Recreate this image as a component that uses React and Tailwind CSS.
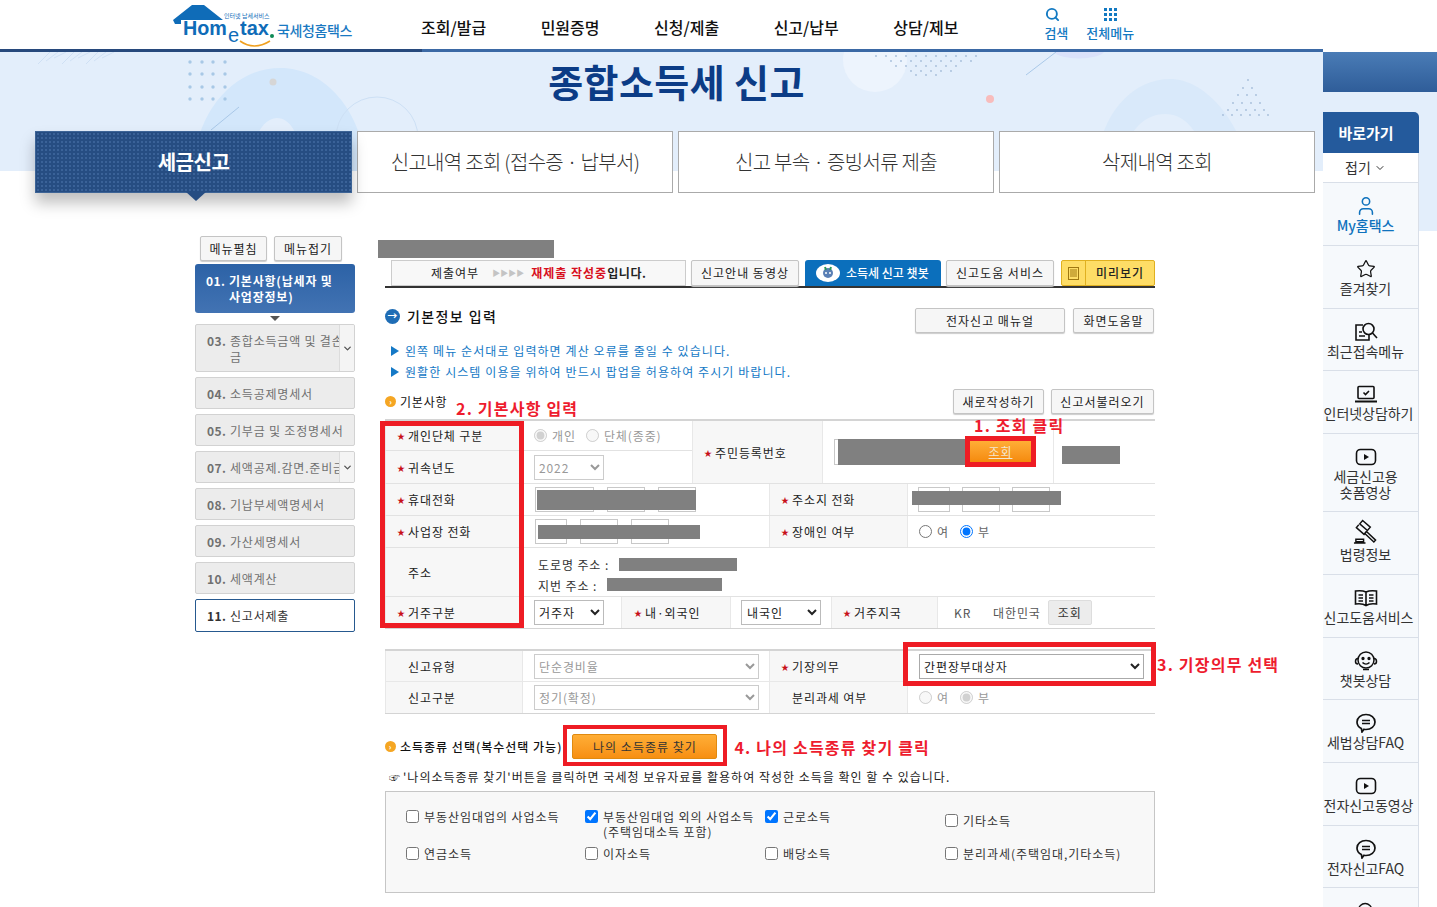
import React from 'react';
import { User, Star, Search, ChevronDown } from 'lucide-react';

const cell = 'flex items-center';
const labelBg = 'bg-[#f7f7f7]';

const Star2 = () => <span className="text-[8px] text-[#c8101a] mr-[5px] w-[6px] leading-none">★</span>;

const Label = ({ req, children, className = '', plain }) => (
  <div className={`${cell} ${labelBg} h-full pt-[1px] border-x border-[#e8e8e8] ${className}`}>
    {req ? <Star2 /> : plain ? null : <span className="w-[11px]" />}
    <span>{children}</span>
  </div>
);

const Redact = ({ className }) => <div className={`absolute bg-[#808080] ${className}`} />;

const Btn = ({ className = '', children }) => (
  <button type="button" className={`h-[25px] border border-[#c4c4c4] rounded-[2px] bg-[#f6f6f6] shadow-[0_1px_1px_#ccc] text-[12px] text-[#222] tracking-[1px] ${className}`}>
    {children}
  </button>
);

const TextBox = ({ className = '' }) => <div className={`h-[25px] border border-[#c8c8c8] bg-white ${className}`} />;

function Logo() {
  return (
    <div className="relative w-[200px] h-[49px] font-['Liberation_Sans',sans-serif]">
      <svg className="absolute left-0 top-[4px]" width="50" height="20" viewBox="0 0 50 20">
        <path d="M0 16 L19 1 L31 1 L50 16 L8 16 L8 20 L2 20 Z" fill="#0f6cb8" />
      </svg>
      <span className="absolute left-[10px] top-[20px] text-[21px] leading-[16px] font-bold text-[#0f6cb8] scale-x-[0.94] origin-left">Hom</span>
      <span className="absolute left-[55px] top-[27px] text-[20px] leading-[16px] text-[#0f6cb8]">e</span>
      <span className="absolute left-[67px] top-[20px] text-[21px] leading-[16px] font-bold text-[#0f6cb8] scale-x-[0.95] origin-left">tax</span>
      <span className="absolute left-[97px] top-[34px] w-[4px] h-[4px] rounded-full bg-[#0e8a56]" />
      <svg className="absolute left-[66px] top-[40px]" width="32" height="8" viewBox="0 0 32 8">
        <path d="M1 1 Q15 11 31 1" fill="none" stroke="#f0a020" strokeWidth="1.6" />
      </svg>
      <span className="absolute left-[51px] top-[13px] text-[6px] leading-[6px] text-[#0f6cb8] font-['Noto_Sans_CJK_KR'] whitespace-nowrap">인터넷 납세서비스</span>
      <span className="absolute left-[104px] top-[21px] text-[14px] leading-[18px] font-medium text-[#1a79c2] font-['Noto_Sans_CJK_KR'] tracking-[-0.4px] whitespace-nowrap">국세청홈택스</span>
    </div>
  );
}

function HeroDecor() {
  return (
    <svg className="absolute inset-0" width="1323" height="119" viewBox="0 52 1323 119">
      <g stroke="#cfe0f4" strokeWidth="1">
        {[0, 1, 2, 3, 4, 5, 6, 7, 8].map((i) => (
          <line key={i} x1={50 + i * 8} y1="52" x2={38 + i * 8} y2={64 - (i % 3) * 3} />
        ))}
      </g>
      <path d="M193 171 C196 110 235 68 280 68 C325 68 362 110 367 171 L303 171 C302 135 290 118 277 118 C264 118 252 135 250 171 Z" fill="#d3e7fb" />
      <circle cx="377" cy="138" r="41" fill="none" stroke="#cde0f5" />
      <line x1="211" y1="130" x2="239" y2="107" stroke="#a9c8e8" />
      <circle cx="273" cy="82" r="3.5" fill="#d6d6d6" />
      {[62, 74, 87, 99].map((y) => [190, 202, 213, 225].map((x) => (
        <circle key={`${x}-${y}`} cx={x} cy={y} r="1.7" fill="#a8c8e6" />
      )))}
      <ellipse cx="875" cy="60" rx="32" ry="32" fill="#edf4fd" />
      {[56, 61, 66, 71, 75].map((y, r) => [0, 1, 2, 3, 4, 5, 6, 7, 8, 9, 10].slice(r, 11 - r).map((i) => (
        <circle key={`${i}-${y}`} cx={876 + i * 10 + (r % 2) * 5} cy={y} r="0.9" fill="#a5bcd8" />
      )))}
      <path d="M1054 52 A26 9 0 0 0 1104 52 Z" fill="#dbe2fa" />
      <line x1="1026" y1="75" x2="1056" y2="52" stroke="#a9c8e8" />
      <circle cx="990" cy="99" r="4" fill="#f8bcbc" />
      <path d="M1095 171 C1100 110 1135 79 1170 79 C1205 79 1240 120 1250 171 L1210 171 C1200 130 1185 114 1165 114 C1145 114 1125 130 1120 171 Z" fill="#d9e9fa" />
      {[80, 88, 95, 103, 110, 115].map((y, r) => [0, 1, 2, 3, 4, 5].slice(0, r + 1).map((i) => (
        <circle key={`t${i}-${y}`} cx={1248 - r * 5 + i * 9} cy={y} r="0.9" fill="#a5bcd8" />
      )))}
    </svg>
  );
}

const tabs = ['신고내역 조회 (접수증 · 납부서)', '신고 부속 · 증빙서류 제출', '삭제내역 조회'];

const menu = [
  ['03.', '종합소득금액 및 결손금', 'h-[48px]', true],
  ['04.', '소득공제명세서', 'h-[32px]'],
  ['05.', '기부금 및 조정명세서', 'h-[32px]'],
  ['07.', '세액공제.감면.준비금', 'h-[32px]', true],
  ['08.', '기납부세액명세서', 'h-[32px]'],
  ['09.', '가산세명세서', 'h-[32px]'],
  ['10.', '세액계산', 'h-[32px]'],
];

function SideMenu() {
  return (
    <div className="w-[160px] text-[12px] tracking-[0.8px]">
      <div className="flex gap-[7px] pl-[5px]">
        <Btn className="w-[67px] bg-[#ededed]">메뉴펼침</Btn>
        <Btn className="w-[68px] bg-[#ededed]">메뉴접기</Btn>
      </div>
      <div className="mt-[3px] h-[49px] rounded-[3px] bg-gradient-to-b from-[#2c62a6] to-[#4273b3] text-white font-bold flex pl-[11px] pt-[9px] leading-[16px]">
        <span className="w-[23px] shrink-0 tracking-[0.4px]">01.</span>
        <span>기본사항(납세자 및<br />사업장정보)</span>
      </div>
      <div className="flex justify-center h-[11px] items-center">
        <div className="w-0 h-0 border-x-[5px] border-x-transparent border-t-[5px] border-t-[#555]" />
      </div>
      <div className="flex flex-col gap-[5px]">
        {menu.map(([no, text, h, scroll]) => (
          <div key={no} className={`relative ${h} overflow-hidden rounded-[2px] border border-[#d2d2d2] bg-[#ececec] text-[#707070] flex items-start pl-[11px] pt-[8px] leading-[16px]`}>
            <span className="w-[23px] shrink-0 font-bold tracking-[0.4px]">{no}</span>
            <span className="pr-[4px]">{text}</span>
            {scroll && (
              <div className="absolute right-0 top-0 bottom-0 w-[15px] bg-[#f4f4f4] border-l border-[#dcdcdc] flex items-center justify-center">
                <ChevronDown size={11} strokeWidth={3} className="text-[#555]" />
              </div>
            )}
          </div>
        ))}
        <div className="h-[33px] rounded-[2px] border border-[#26598f] bg-white text-[#333] flex items-center pl-[11px]">
          <span className="w-[23px] shrink-0 font-bold tracking-[0.4px]">11.</span>
          <span>신고서제출</span>
        </div>
      </div>
    </div>
  );
}

const Annot = ({ className = '', children }) => (
  <span className={`text-[16px] leading-[20px] font-bold text-[#ee1c2e] tracking-[1.2px] whitespace-nowrap ${className}`}>{children}</span>
);

const OrangeDot = () => (
  <span className="w-[11px] h-[11px] rounded-full bg-[#f5a623] text-white text-[8px] leading-[11px] text-center font-bold shrink-0">›</span>
);

const Tri = () => <div className="w-0 h-0 border-y-[5px] border-y-transparent border-l-[8px] border-l-[#1579c6] shrink-0" />;

function BasicTable() {
  return (
    <div className="border-t-2 border-[#d4d4d4] text-[12px] text-[#222] tracking-[0.9px] relative">
      <div className="flex h-[63px] border-b border-[#e2e2e2]">
        <div className="w-[307px] flex flex-col">
          <div className="flex h-[30px] border-b border-[#e2e2e2]">
            <Label req className="w-[139px] pl-[11px]">개인단체 구분</Label>
            <div className={`${cell} pl-[10px] gap-[5px] text-[#999]`}>
              <input type="radio" disabled defaultChecked name="k" />
              <span>개인</span>
              <input type="radio" disabled name="k" className="ml-[5px]" />
              <span>단체(종중)</span>
            </div>
          </div>
          <div className="flex h-[32px]">
            <Label req className="w-[139px] pl-[11px]">귀속년도</Label>
            <div className={`${cell} pl-[10px]`}>
              <select disabled className="w-[70px] h-[25px] border border-[#ccc] text-[#999] text-[12px]"><option>2022</option></select>
            </div>
          </div>
        </div>
        <Label req className="w-[131px] pl-[11px]">주민등록번호</Label>
        <div className="relative w-[231px] border-r border-[#e8e8e8] pl-[11px] pt-[18px]">
          <TextBox className="w-[140px] h-[26px]" />
          <Redact className="left-[15px] top-[18px] w-[128px] h-[26px]" />
          <div className="absolute left-[142px] top-[15px] w-[71px] h-[31px] border-[5px] border-[#ee1c24] bg-gradient-to-b from-[#ffae35] to-[#f58a0a] text-[#f3e6d0] text-[12px] text-center leading-[21px] underline">조회</div>
        </div>
        <div className="relative flex-1">
          <Redact className="left-[8px] top-[25px] w-[58px] h-[18px]" />
        </div>
      </div>
      <div className="flex h-[32px] border-b border-[#e2e2e2]">
        <Label req className="w-[139px] pl-[11px]">휴대전화</Label>
        <div className={`${cell} relative w-[245px] pl-[11px] gap-[13px]`}>
          <TextBox className="w-[59px]" />
          <TextBox className="w-[38px]" />
          <TextBox className="w-[38px]" />
          <Redact className="left-[13px] top-[6px] w-[159px] h-[20px]" />
        </div>
        <Label req className="w-[139px] pl-[11px]">주소지 전화</Label>
        <div className={`${cell} relative flex-1 pl-[10px] gap-[12px]`}>
          <TextBox className="w-[32px]" />
          <TextBox className="w-[38px]" />
          <TextBox className="w-[38px]" />
          <Redact className="left-[4px] top-[7px] w-[149px] h-[14px]" />
        </div>
      </div>
      <div className="flex h-[32px] border-b border-[#e2e2e2]">
        <Label req className="w-[139px] pl-[11px]">사업장 전화</Label>
        <div className={`${cell} relative w-[245px] pl-[11px] gap-[13px]`}>
          <TextBox className="w-[32px]" />
          <TextBox className="w-[38px]" />
          <TextBox className="w-[38px]" />
          <Redact className="left-[14px] top-[9px] w-[162px] h-[14px]" />
        </div>
        <Label req className="w-[139px] pl-[11px]">장애인 여부</Label>
        <div className={`${cell} flex-1 pl-[11px] gap-[5px] text-[#666]`}>
          <input type="radio" name="d" />
          <span>여</span>
          <input type="radio" name="d" defaultChecked className="ml-[6px]" />
          <span>부</span>
        </div>
      </div>
      <div className="flex h-[49px] border-b border-[#e2e2e2]">
        <Label className="w-[139px] pl-[11px]">주소</Label>
        <div className="relative flex-1 pl-[14px] pt-[6px] leading-[21px] text-[#333]">
          <div>도로명 주소 :</div>
          <div>지번 주소 :</div>
          <Redact className="left-[95px] top-[10px] w-[118px] h-[13px]" />
          <Redact className="left-[83px] top-[30px] w-[115px] h-[13px]" />
        </div>
      </div>
      <div className="flex h-[32px] border-b border-[#d4d4d4]">
        <Label req className="w-[139px] pl-[11px]">거주구분</Label>
        <div className={`${cell} w-[97px] pl-[10px]`}>
          <select className="w-[70px] h-[25px] border border-[#bbb] text-[12px]"><option>거주자</option></select>
        </div>
        <Label req className="w-[110px] pl-[12px]">내·외국인</Label>
        <div className={`${cell} w-[100px] pl-[10px]`}>
          <select className="w-[80px] h-[25px] border border-[#bbb] pl-[1px] text-[12px]"><option>내국인</option></select>
        </div>
        <Label req className="w-[107px] pl-[11px]">거주지국</Label>
        <div className={`${cell} flex-1 pl-[16px] text-[#555]`}>
          <span className="w-[39px]">KR</span>
          <span className="whitespace-nowrap">대한민국</span>
          <span className="ml-[7px] w-[44px] h-[25px] border border-[#ddd] rounded-[2px] bg-[#ececec] flex items-center justify-center text-[#333]">조회</span>
        </div>
      </div>
    </div>
  );
}

function ReportTable() {
  return (
    <div className="relative mt-[20px] border-t-2 border-[#d4d4d4] text-[12px] text-[#222] tracking-[0.9px]">
      <div className="flex h-[31px] border-b border-[#e8e8e8]">
        <Label plain className="w-[138px] pl-[22px]">신고유형</Label>
        <div className={`${cell} w-[246px] pl-[11px]`}>
          <select disabled className="w-[225px] h-[25px] border border-[#ccc] text-[#999] text-[12px]"><option>단순경비율</option></select>
        </div>
        <Label req className="w-[139px] pl-[11px]">기장의무</Label>
        <div className={`${cell} flex-1 pl-[11px]`}>
          <select className="w-[225px] h-[25px] border border-[#aaa] text-[12px]"><option>간편장부대상자</option></select>
        </div>
      </div>
      <div className="flex h-[32px] border-b border-[#d4d4d4]">
        <Label plain className="w-[138px] pl-[22px]">신고구분</Label>
        <div className={`${cell} w-[246px] pl-[11px]`}>
          <select disabled className="w-[225px] h-[25px] border border-[#ccc] text-[#999] text-[12px]"><option>정기(확정)</option></select>
        </div>
        <Label className="w-[139px] pl-[11px]">분리과세 여부</Label>
        <div className={`${cell} flex-1 pl-[11px] gap-[5px] text-[#999]`}>
          <input type="radio" disabled name="s" />
          <span>여</span>
          <input type="radio" disabled defaultChecked name="s" className="ml-[6px]" />
          <span>부</span>
        </div>
      </div>
      <div className="absolute left-[518px] -top-[9px] w-[253px] h-[44px] border-[5px] border-[#ee1c24] pointer-events-none" />
      <Annot className="absolute left-[772px] top-[3px]">3. 기장의무 선택</Annot>
    </div>
  );
}

const Check = ({ checked, className = '', children }) => (
  <label className={`flex items-start gap-[5px] ${className}`}>
    <input type="checkbox" defaultChecked={checked} className="mt-[1px] shrink-0" />
    <span className="leading-[15px] whitespace-nowrap">{children}</span>
  </label>
);

function MainForm() {
  return (
    <div className="ml-[30px] w-[770px]">
      <div className="-ml-[7px] mt-[4px] w-[176px] h-[18px] bg-[#808080]" />
      <div className="mt-[2px] h-[28px] border-b-2 border-[#333] flex gap-[5px] text-[12px] tracking-[1px] text-[#222]">
        <div className="ml-[6px] w-[295px] h-[26px] border border-[#ccc] bg-[#f8f8f8] flex items-center pl-[39px] whitespace-nowrap">
          <span>제출여부</span>
          <span className="ml-[13px] text-[#c4c4c4] text-[8px] tracking-[0px]">▶▶▶▶</span>
          <span className="ml-[7px] font-bold text-[#d8101e] tracking-[1px]">재제출 작성중</span>
          <span className="font-bold tracking-[0.6px]">입니다.</span>
        </div>
        <Btn className="w-[108px] h-[26px]">신고안내 동영상</Btn>
        <div className="ml-[1px] w-[136px] h-[26px] rounded-t-[3px] bg-[#0b6fbc] text-white flex items-center pl-[11px] gap-[6px]">
          <svg width="24" height="20" viewBox="0 0 24 20">
            <ellipse cx="12" cy="10" rx="12" ry="9" fill="#fff" />
            <circle cx="12" cy="10" r="5" fill="#5a7fb5" />
            <path d="M9 4 L10 7 M15 4 L14 7" stroke="#2a9a5a" strokeWidth="2" />
            <circle cx="10" cy="10" r="1" fill="#fff" />
            <circle cx="14" cy="10" r="1" fill="#fff" />
          </svg>
          <span className="font-medium tracking-[0px] whitespace-nowrap">소득세 신고 챗봇</span>
        </div>
        <Btn className="w-[108px] h-[26px]">신고도움 서비스</Btn>
        <div className="ml-[2px] w-[94px] h-[26px] rounded-[2px] border border-[#e0b020] bg-[#fedd66] flex items-center">
          <div className="w-[24px] h-full border-r border-[#e0b020] flex items-center justify-center">
            <svg width="11" height="13" viewBox="0 0 11 13" fill="none" stroke="#a07810">
              <rect x="0.5" y="0.5" width="10" height="12" />
              <path d="M2 3h7M2 5h7M2 7h7M2 9h7" />
            </svg>
          </div>
          <span className="flex-1 text-center font-medium">미리보기</span>
        </div>
      </div>

      <div className="mt-[20px] flex items-start justify-between pr-[1px]">
        <div className="flex items-center gap-[7px] h-[16px]">
          <span className="w-[15px] h-[15px] rounded-full bg-[#1f6db5] text-white text-[10px] leading-[14px] text-center font-bold">→</span>
          <span className="text-[14px] font-medium text-[#111] tracking-[1.4px]">기본정보 입력</span>
        </div>
        <div className="flex gap-[8px]">
          <Btn className="w-[150px]">전자신고 매뉴얼</Btn>
          <Btn className="w-[81px]">화면도움말</Btn>
        </div>
      </div>

      <div className="mt-[7px] text-[12px] leading-[21px] text-[#1579c6] tracking-[1.08px]">
        <div className="flex items-center gap-[6px] pl-[6px]"><Tri />왼쪽 메뉴 순서대로 입력하면 계산 오류를 줄일 수 있습니다.</div>
        <div className="flex items-center gap-[6px] pl-[6px]"><Tri />원활한 시스템 이용을 위하여 반드시 팝업을 허용하여 주시기 바랍니다.</div>
      </div>

      <div className="relative mt-[7px] flex items-center justify-between pr-[1px]">
        <div className="flex items-center">
          <OrangeDot />
          <span className="ml-[4px] text-[12px] tracking-[0.8px] text-[#111]">기본사항</span>
          <Annot className="absolute left-[71px] top-[9px]">2. 기본사항 입력</Annot>
        </div>
        <div className="flex gap-[7px]">
          <Btn className="w-[91px]">새로작성하기</Btn>
          <Btn className="w-[103px]">신고서불러오기</Btn>
        </div>
      </div>

      <div className="relative mt-[5px]">
        <BasicTable />
        <div className="absolute -left-[5px] top-[2px] w-[144px] h-[207px] border-[5px] border-[#ee1c24] pointer-events-none" />
        <Annot className="absolute left-[589px] -top-[4px]">1. 조회 클릭</Annot>
      </div>

      <ReportTable />

      <div className="mt-[20px] h-[25px] flex items-center text-[12px] text-[#111] tracking-[1px]">
        <OrangeDot />
        <span className="ml-[4px] font-medium whitespace-nowrap">소득종류 선택(복수선택 가능)</span>
        <div className="ml-[10px] relative">
          <button type="button" className="w-[145px] h-[25px] rounded-[2px] border border-[#e08a10] bg-gradient-to-b from-[#ffae35] to-[#f78f10] text-[#333] text-[12px] tracking-[1px]">나의 소득종류 찾기</button>
          <div className="absolute -left-[9px] -top-[9px] w-[164px] h-[41px] border-[4px] border-[#ee1c24]" />
        </div>
        <Annot className="ml-[17px]">4. 나의 소득종류 찾기 클릭</Annot>
      </div>
      <div className="mt-[8px] h-[20px] pl-[4px] flex items-center text-[12px] text-[#222] tracking-[1px] whitespace-nowrap">
        <span className="text-[11px] mr-[2px]">☞</span>
        <span>'나의소득종류 찾기'버튼을 클릭하면 국세청 보유자료를 활용하여 작성한 소득을 확인 할 수 있습니다.</span>
      </div>
      <div className="mt-[4px] h-[102px] border border-[#c6c6c6] bg-[#f8f8f8] pl-[20px] pt-[17px] grid grid-cols-[179px_180px_180px_1fr] grid-rows-[37px_auto] text-[12px] text-[#333] tracking-[0.95px]">
        <Check>부동산임대업의 사업소득</Check>
        <Check checked>부동산임대업 외의 사업소득<br />(주택임대소득 포함)</Check>
        <Check checked>근로소득</Check>
        <Check className="mt-[4px]">기타소득</Check>
        <Check>연금소득</Check>
        <Check>이자소득</Check>
        <Check>배당소득</Check>
        <Check>분리과세(주택임대,기타소득)</Check>
      </div>
    </div>
  );
}

const PlayIcon = () => (
  <svg width="22" height="18" viewBox="0 0 22 18" fill="none" stroke="#111" strokeWidth="1.6">
    <rect x="1.5" y="1.5" width="19" height="15" rx="4" />
    <path d="M9 6l5 3-5 3z" fill="#111" stroke="none" />
  </svg>
);
const ChatIcon = () => (
  <svg width="22" height="20" viewBox="0 0 22 20" fill="none" stroke="#111" strokeWidth="1.7">
    <path d="M11 1.5c5 0 9 3 9 7.5s-4 7.5-9 7.5c-1 0-1.500-.1-2-.2L7 19l-.6-3.500C3.500 14.200 2 11.800 2 9c0-4.500 4-7.500 9-7.500z" />
    <path d="M7 7.500h8M7 10.500h8" />
  </svg>
);
const DocSearchIcon = () => (
  <svg width="24" height="20" viewBox="0 0 24 20" fill="none" stroke="#111" strokeWidth="1.6">
    <path d="M9 3H2v15h13v-5" />
    <path d="M5 10h3M5 14h6" />
    <circle cx="14.500" cy="7" r="5.500" />
    <path d="M18.500 11l4.500 5" />
  </svg>
);
const LaptopIcon = () => (
  <svg width="24" height="18" viewBox="0 0 24 18" fill="none" stroke="#111" strokeWidth="1.6">
    <rect x="4" y="1.500" width="16" height="12" rx="1" />
    <path d="M1 16.500h22" strokeWidth="2" />
    <path d="M9.500 7.500l2 2 3.500-3.500" />
  </svg>
);
const BookIcon = () => (
  <svg width="24" height="18" viewBox="0 0 24 18" fill="none" stroke="#111" strokeWidth="1.6">
    <path d="M12 3C9 1.500 5 1.500 1.500 2v13c3.500-.5 7.500-.5 10.500 1.500 3-2 7-2 10.500-1.500V2C19 1.500 15 1.500 12 3zM12 3v13.500" />
    <path d="M4.500 6h4.500M4.500 9h4.500M4.500 12h4.500M15 6h4.500M15 9h4.500M15 12h4.500" />
  </svg>
);
const HeadsetIcon = () => (
  <svg width="24" height="22" viewBox="0 0 24 22" fill="none" stroke="#111" strokeWidth="1.5">
    <circle cx="12" cy="10" r="8" />
    <path d="M4 8.500c-2 0-2.500 1.500-2.500 3s.5 2.500 2.500 2.500M20 8.500c2 0 2.500 1.500 2.500 3s-.5 2.500-2.500 2.500" />
    <path d="M8.500 12.500c2 2 5 2 7 0" />
    <path d="M9 19.500h6" />
    <circle cx="9" cy="8.500" r=".9" fill="#111" />
    <circle cx="15" cy="8.500" r=".9" fill="#111" />
  </svg>
);
const GavelIcon = () => (
  <svg className="-translate-y-[4px]" width="25" height="25" viewBox="0 0 26 26" fill="none" stroke="#111" strokeWidth="1.5">
    <path d="M10 1.500l8 7-3 3.500-8-7z" />
    <path d="M6 6l-2.500 3 8 7 2.500-3" />
    <path d="M13.500 12.500l10 9.500-1.800 2-10-9.500" />
    <path d="M3 21h8v2.500H3zM1 25h12" />
  </svg>
);

const quick = [
  { icon: <User size={22} strokeWidth={1.7} className="text-[#0f72bd]" />, label: 'My홈택스', h: 'h-[63px]', blue: true },
  { icon: <Star size={20} strokeWidth={1.5} />, label: '즐겨찾기', h: 'h-[63px]' },
  { icon: <DocSearchIcon />, label: '최근접속메뉴', h: 'h-[62px]' },
  { icon: <LaptopIcon />, label: '인터넷상담하기', h: 'h-[63px]', wide: true },
  { icon: <PlayIcon />, label: <>세금신고용<br />숏폼영상</>, h: 'h-[78px]' },
  { icon: <GavelIcon />, label: '법령정보', h: 'h-[63px]' },
  { icon: <BookIcon />, label: '신고도움서비스', h: 'h-[63px]', wide: true },
  { icon: <HeadsetIcon />, label: '챗봇상담', h: 'h-[62px]' },
  { icon: <ChatIcon />, label: '세법상담FAQ', h: 'h-[63px]' },
  { icon: <PlayIcon />, label: '전자신고동영상', h: 'h-[63px]', wide: true },
  { icon: <ChatIcon />, label: '전자신고FAQ', h: 'h-[62px]' },
  { icon: <Search size={20} strokeWidth={1.6} />, h: 'h-[63px]' },
];

function QuickBar() {
  return (
    <div className="w-[114px] shrink-0 pt-[52px]">
      <div className="h-[40px] bg-gradient-to-b from-[#4a7cb6] to-[#2f5d99]" />
      <div className="pt-[20px] pr-[18px] bg-[linear-gradient(#e3eefb_139px,#ffffff_139px)]">
        <div className="h-[41px] rounded-tr-[5px] bg-[#245a9c] text-white text-[15px] font-bold flex items-center justify-center pr-[10px] pt-[2px]">바로가기</div>
        <div className="h-[30px] bg-white border-r border-b border-[#d9dfe8] flex items-center justify-center gap-[3px] pr-[10px] text-[14px] text-[#333]">
          접기 <ChevronDown size={12} />
        </div>
        {quick.map((q, i) => (
          <div key={i} className={`${q.h} shrink-0 bg-[#f6f9fc] border-r border-b border-[#d9dfe8] flex flex-col items-center pt-[12px] pr-[10px] text-[14px] leading-[16px] text-center tracking-[-0.05px] whitespace-nowrap ${q.blue ? 'text-[#0f72bd] font-medium' : 'text-[#333]'}`}>
            <div className="h-[22px] flex items-center text-[#111]">{q.icon}</div>
            {q.label && <div className={q.wide ? 'ml-[6px]' : ''}>{q.label}</div>}
          </div>
        ))}
      </div>
    </div>
  );
}

export default function App() {
  return (
    <div className="w-[1437px] h-[907px] overflow-hidden flex bg-white font-['Noto_Sans_CJK_KR','Liberation_Sans',sans-serif]">
      <div className="w-[1323px] shrink-0">
        <header className="h-[52px] border-b-[3px] border-[#3b69a5] flex pl-[173px] relative">
          <Logo />
          <nav className="ml-[48px] flex gap-[54.5px] pt-[16px] text-[16px] leading-[22px] text-[#111] font-medium whitespace-nowrap">
            <a>조회/발급</a>
            <a>민원증명</a>
            <a>신청/제출</a>
            <a>신고/납부</a>
            <a>상담/제보</a>
          </nav>
          <div className="ml-[86px] flex gap-[18px] pt-[7px] text-[13px] leading-[16px] font-medium text-[#1279c2] whitespace-nowrap">
            <div className="flex flex-col items-center">
              <Search size={15} strokeWidth={3} className="-ml-[8px]" />
              <span className="mt-[3px]">검색</span>
            </div>
            <div className="flex flex-col items-center">
              <div className="grid grid-cols-3 gap-[2px] w-[13px] h-[15px] content-center">
                {[0, 1, 2, 3, 4, 5, 6, 7, 8].map((i) => <span key={i} className="w-[3px] h-[3px] bg-[#1279c2]" />)}
              </div>
              <span className="mt-[3px]">전체메뉴</span>
            </div>
          </div>
          <div className="absolute left-0 -bottom-[3px] h-[3px] w-[422px] bg-[#27497c]" />
        </header>

        <section className="relative h-[119px] bg-[#e3eefb] overflow-hidden flex justify-center">
          <HeroDecor />
          <h1 className="relative mt-[2px] ml-[30px] text-[38px] leading-[54px] font-bold text-[#0c3c86] tracking-[0.4px]">종합소득세 신고</h1>
        </section>

        <div className="relative -mt-[40px] pl-[35px] flex gap-[5px]">
          <div className="relative w-[317px] h-[62px] bg-[#264d82] bg-[radial-gradient(#3a6298_1px,transparent_1px)] bg-[size:4px_4px] border border-[#3d6496] shadow-[0_10px_14px_rgba(0,0,0,0.25)] text-white text-[20px] font-bold flex items-center justify-center tracking-[-0.5px]">
            세금신고
            <div className="absolute left-[150px] top-full w-0 h-0 border-x-[10px] border-x-transparent border-t-[9px] border-t-[#264d82]" />
          </div>
          {tabs.map((t) => (
            <div key={t} className="w-[316px] h-[62px] bg-white border border-[#aaa] text-[#333] text-[20px] font-light flex items-center justify-center tracking-[-0.7px]">{t}</div>
          ))}
        </div>

        <div className="mt-[43px] pl-[195px] flex items-start">
          <SideMenu />
          <MainForm />
        </div>
      </div>
      <QuickBar />
    </div>
  );
}
